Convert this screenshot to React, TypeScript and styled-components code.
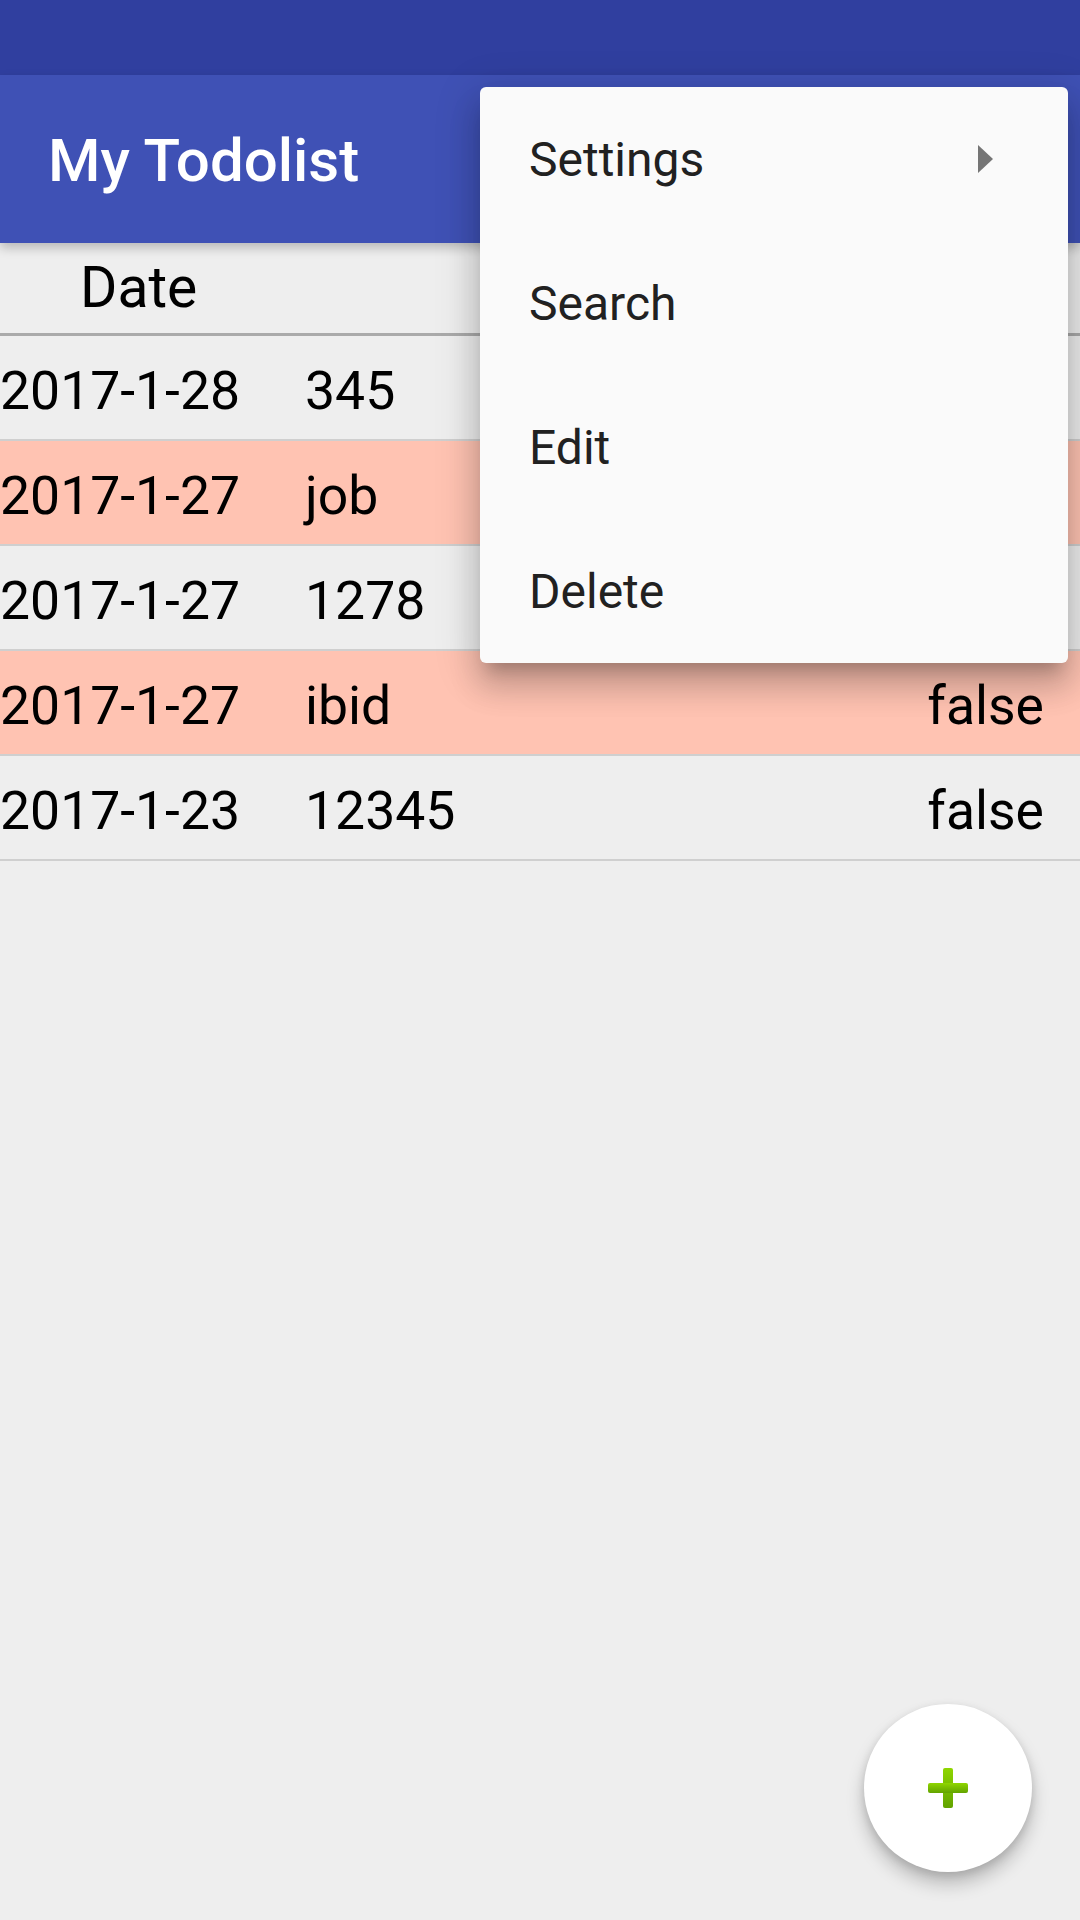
import { Fragment } from "react";
import styled, { createGlobalStyle } from "styled-components";

const GlobalStyle = createGlobalStyle`
    html, body {
        margin: 0;
        padding: 0;
        background: #eeeeee;
    }
    body {
        font-family: Roboto, "Noto Sans", "Liberation Sans", sans-serif;
    }
`;

interface Todo {
    date: string;
    text: string;
    done: string;
    marked: boolean;
}

const todos: Todo[] = [
    { date: "2017-1-28", text: "345", done: "false", marked: false },
    { date: "2017-1-27", text: "job", done: "false", marked: true },
    { date: "2017-1-27", text: "1278", done: "false", marked: false },
    { date: "2017-1-27", text: "ibid", done: "false", marked: true },
    { date: "2017-1-23", text: "12345", done: "false", marked: false },
];

const menuItems = ["Settings", "Search", "Edit", "Delete"];

const Screen = styled.div`
    position: relative;
    width: 1080px;
    height: 1920px;
    overflow: hidden;
    background: #eeeeee;
    display: flex;
    flex-direction: column;
`;

const StatusBar = styled.div`
    height: 75px;
    background: #303f9f;
`;

const Toolbar = styled.header`
    position: relative;
    z-index: 1;
    height: 168px;
    display: flex;
    align-items: center;
    padding-left: 48px;
    background: #3f51b5;
    box-shadow: 0 5px 10px rgba(0, 0, 0, 0.22);
`;

const Title = styled.h1`
    margin: 0;
    color: #ffffff;
    font-size: 60px;
    font-weight: 500;
    line-height: 1;
    padding-top: 4px;
`;

const HeaderRow = styled.div`
    height: 90px;
    display: flex;
    align-items: center;
    border-bottom: 3px solid #aaaaaa;
`;

const HeaderCell = styled.span`
    padding-left: 80px;
    font-size: 57px;
    line-height: 90px;
    color: #000000;
`;

const Row = styled.div<{ $marked: boolean }>`
    height: 103px;
    display: flex;
    align-items: center;
    background: ${(p) => (p.$marked ? "#ffc3b2" : "#eeeeee")};
    border-bottom: 2px solid #cfcfcf;
    font-size: 53.5px;
    line-height: 103px;
    color: #000000;
`;

const DateCell = styled.span`
    width: 305px;
    flex-shrink: 0;
    padding-top: 6px;
`;

const TextCell = styled.span`
    flex: 1;
    padding-top: 6px;
`;

const DoneCell = styled.span`
    padding-right: 36px;
    padding-top: 6px;
`;

const Menu = styled.ul`
    position: absolute;
    z-index: 3;
    left: 480px;
    top: 87px;
    width: 588px;
    margin: 0;
    padding: 0;
    list-style: none;
    background: #fafafa;
    border-radius: 6px;
    box-shadow:
        0 24px 30px 3px rgba(0, 0, 0, 0.14),
        0 9px 42px 8px rgba(0, 0, 0, 0.12),
        0 15px 15px -9px rgba(0, 0, 0, 0.2);
`;

const MenuItem = styled.li`
    height: 144px;
    display: flex;
    align-items: center;
    justify-content: space-between;
    padding: 0 75px 0 49px;
    font-size: 48px;
    color: #212121;
`;

const SubArrow = styled.span`
    width: 0;
    height: 0;
    border-top: 14px solid transparent;
    border-bottom: 14px solid transparent;
    border-left: 15px solid #757575;
`;

const Fab = styled.button`
    position: absolute;
    z-index: 2;
    left: 864px;
    top: 1704px;
    width: 168px;
    height: 168px;
    border: none;
    border-radius: 50%;
    background: #ffffff;
    display: flex;
    align-items: center;
    justify-content: center;
    box-shadow: 0 12px 18px rgba(0, 0, 0, 0.22), 0 3px 8px rgba(0, 0, 0, 0.12);
`;

function PlusIcon() {
    return (
        <svg width="40" height="40" viewBox="0 0 40 40">
            <defs>
                <linearGradient id="plusGreen" x1="0" y1="0" x2="0" y2="1">
                    <stop offset="0" stopColor="#8fd600" />
                    <stop offset="1" stopColor="#62a300" />
                </linearGradient>
            </defs>
            <rect x="15" y="0" width="10" height="40" rx="2" fill="url(#plusGreen)" />
            <rect x="0" y="15" width="40" height="10" rx="2" fill="url(#plusGreen)" />
        </svg>
    );
}

export default function App() {
    return (
        <Fragment>
            <GlobalStyle />
            <Screen>
                <StatusBar />
                <Toolbar>
                    <Title>My Todolist</Title>
                </Toolbar>
                <HeaderRow>
                    <HeaderCell>Date</HeaderCell>
                </HeaderRow>
                {todos.map((t, i) => (
                    <Row key={i} $marked={t.marked}>
                        <DateCell>{t.date}</DateCell>
                        <TextCell>{t.text}</TextCell>
                        <DoneCell>{t.done}</DoneCell>
                    </Row>
                ))}
                <Menu>
                    {menuItems.map((label) => (
                        <MenuItem key={label}>
                            {label}
                            {label === "Settings" && <SubArrow />}
                        </MenuItem>
                    ))}
                </Menu>
                <Fab type="button">
                    <PlusIcon />
                </Fab>
            </Screen>
        </Fragment>
    );
}
